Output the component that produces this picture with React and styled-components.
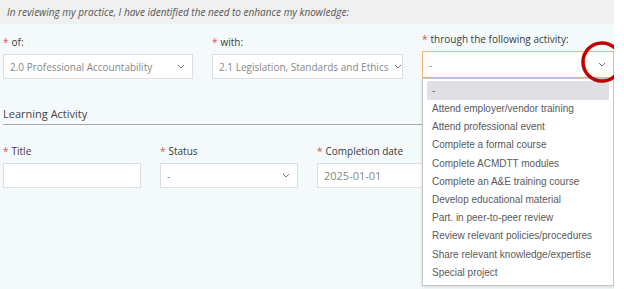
import React from 'react'
import { styled, createGlobalStyle } from 'styled-components'

const GlobalStyle = createGlobalStyle`
  html, body {
    margin: 0;
    padding: 0;
    background: #ffffff;
    overflow: hidden;
  }
`;

const Page = styled.div`
  width: 614px;
  height: 289px;
  background: #f4f9fc;
  font-family: "Open Sans", "Liberation Sans", sans-serif;
  color: #444;
  position: relative;
  overflow: hidden;
`;

const Banner = styled.div`
  height: 23px;
  background: #f0f0f0;
  display: flex;
  align-items: center;
  padding-left: 7px;
  font-size: 10px;
  font-style: italic;
  color: #555;
  border-bottom: 1px solid #eef1f3;
`;

const Grid = styled.div`
  display: grid;
  grid-template-columns: ${p => p.cols};
  column-gap: 19px;
  padding: 0 0 0 3px;
  margin-top: ${p => p.top}px;
`;

const Field = styled.div`
  display: flex;
  flex-direction: column;
  margin-top: ${p => p.shift || 0}px;
`;

const Label = styled.label`
  font-size: 10px;
  color: #3a3a3a;
  height: 12px;
  line-height: 12px;
  margin-bottom: 6px;
  white-space: nowrap;
  span {
    color: #d9534f;
    margin-right: 3px;
  }
`;

const Control = styled.div`
  position: relative;
`;

const Box = styled.div`
  height: ${p => (p.focus ? 27 : 25)}px;
  box-sizing: border-box;
  background: #fff;
  border: 1px solid ${p => (p.focus ? '#f5b47a' : '#dcdfe2')};
  display: flex;
  align-items: center;
  justify-content: space-between;
  gap: 6px;
  padding: 0 7px 0 6px;
  font-size: ${p => p.size || 10}px;
  color: #888;
  white-space: nowrap;
  overflow: hidden;
  svg { flex-shrink: 0; }
`;

const Chevron = () => (
  <svg width="8" height="5" viewBox="0 0 8 5">
    <path d="M1 1 L4 4 L7 1" fill="none" stroke="#777" strokeWidth="1" />
  </svg>
);

const Section = styled.div`
  margin: 27px 0 0 3px;
  font-size: 11px;
  color: #444;
  padding-bottom: 3px;
  border-bottom: 1px solid #a7a9ab;
`;

const Menu = styled.ul`
  position: absolute;
  top: 100%;
  left: 0;
  width: 192px;
  height: 208px;
  box-sizing: border-box;
  margin: 0;
  padding: 2px 4px 0;
  list-style: none;
  background: #fff;
  border: 1px solid #c6c8ca;
  box-shadow: 0 1px 3px rgba(0, 0, 0, 0.15);
  font-family: "Liberation Sans", Arial, sans-serif;
  font-size: 10px;
  color: #5a5a5a;
  z-index: 2;
`;

const Option = styled.li`
  height: ${p => (p.active ? 19 : 18.2)}px;
  line-height: ${p => (p.active ? 19 : 18.2)}px;
  padding-left: 5px;
  border-radius: 2px;
  background: ${p => (p.active ? '#dfdfe4' : 'transparent')};
`;

const Ring = styled.svg`
  position: absolute;
  left: 581px;
  top: 41px;
  z-index: 3;
  overflow: visible;
`;

const Footer = styled.div`
  position: absolute;
  top: 286px;
  left: 3px;
  font-size: 10px;
  color: #c4c8cc;
  white-space: nowrap;
`;

const options = [
  '-',
  'Attend employer/vendor training',
  'Attend professional event',
  'Complete a formal course',
  'Complete ACMDTT modules',
  'Complete an A&E training course',
  'Develop educational material',
  'Part. in peer-to-peer review',
  'Review relevant policies/procedures',
  'Share relevant knowledge/expertise',
  'Special project',
]

const App = () => {
  return (
    <Page>
      <GlobalStyle />
      <Banner>In reviewing my practice, I have identified the need to enhance my knowledge:</Banner>
      <Grid cols="190px 191px 192px" top={12}>
        <Field>
          <Label><span>*</span>of:</Label>
          <Box>2.0 Professional Accountability<Chevron /></Box>
        </Field>
        <Field>
          <Label><span>*</span>with:</Label>
          <Box>2.1 Legislation, Standards and Ethics<Chevron /></Box>
        </Field>
        <Field shift={-3}>
          <Label><span>*</span>through the following activity:</Label>
          <Control>
            <Box focus>-<Chevron /></Box>
            <Menu>
              {options.map((o, i) => (
                <Option key={o} active={i === 0}>{o}</Option>
              ))}
            </Menu>
          </Control>
        </Field>
      </Grid>
      <Section>Learning Activity</Section>
      <Grid cols="138px 138px 138px 138px" top={20}>
        <Field>
          <Label><span>*</span>Title</Label>
          <Box />
        </Field>
        <Field>
          <Label><span>*</span>Status</Label>
          <Box>-<Chevron /></Box>
        </Field>
        <Field>
          <Label><span>*</span>Completion date</Label>
          <Box size={11}>2025-01-01</Box>
        </Field>
      </Grid>
      <Footer>Please describe the learning activity and how it relates to the selected competency areas in your practice</Footer>
      <Ring width="42" height="42" viewBox="0 0 42 42">
        <circle cx="21" cy="21" r="19" fill="none" stroke="#c00000" strokeWidth="3.5" />
      </Ring>
    </Page>
  )
}

export default App
